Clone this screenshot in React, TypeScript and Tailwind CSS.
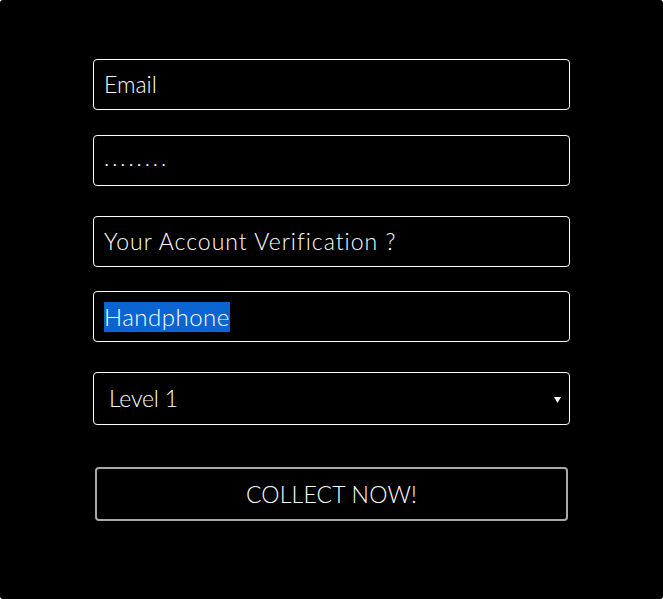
export default function App() {
  const field =
    "h-[51px] w-[477px] rounded-[4px] border border-white bg-black flex items-center px-[10px] text-white";
  return (
    <div
      className="min-h-[599px] w-[663px] bg-black rounded-[3px]"
      style={{ fontFamily: "Lato, 'Open Sans', sans-serif" }}
    >
      <div className="flex flex-col pl-[93px] pt-[59px]">
        {/* Email */}
        <div className={field + " h-[51px]"}>
          <span className="text-[23px] font-light">Email</span>
        </div>

        {/* Password */}
        <div className={field + " mt-[25px] h-[51px]"}>
          <span className="text-[22px] font-light tracking-[3px] leading-none pb-[6px]">........</span>
        </div>

        {/* Verification */}
        <div className={field + " mt-[30px] h-[51px]"}>
          <span className="text-[23px] font-light tracking-[1px]">Your Account Verification ?</span>
        </div>

        {/* Handphone (selected) */}
        <div className={field + " mt-[24px] h-[51px]"}>
          <span className="text-[24px] font-light tracking-[0.5px] bg-[#0a64d2] leading-[30px]">Handphone</span>
        </div>

        {/* Level select */}
        <div className={field + " mt-[30px] h-[53px] justify-between pl-[15px] pr-[8px]"}>
          <span className="text-[23px] font-light tracking-[-0.2px]">Level 1</span>
          <svg width="7" height="6" viewBox="0 0 7 6" className="mt-[2px]">
            <path d="M0 0 H7 L3.5 6 Z" fill="#fff" />
          </svg>
        </div>

        {/* Button */}
        <button className="mt-[42px] ml-[2px] h-[54px] w-[473px] rounded-[4px] border-2 border-[#a9a9a9] bg-black text-white flex items-center justify-center">
          <span className="text-[23px] font-light uppercase tracking-[0.2px]">Collect Now!</span>
        </button>
      </div>
    </div>
  );
}
